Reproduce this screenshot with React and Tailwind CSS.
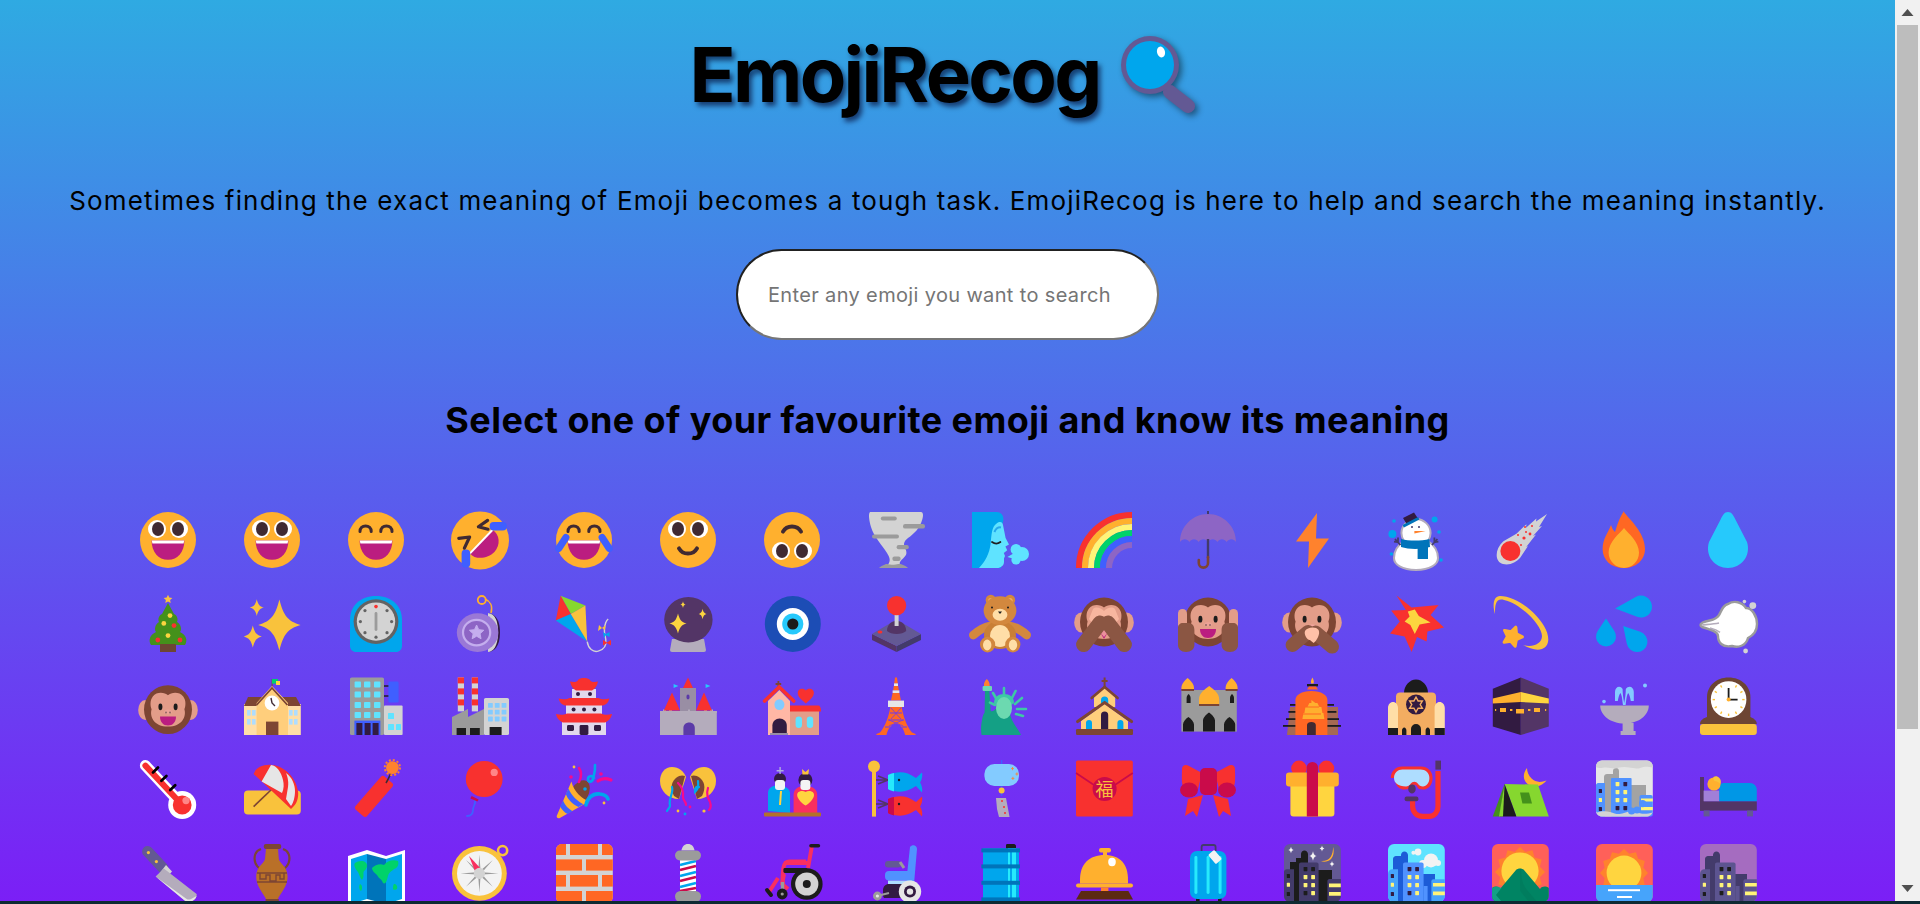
import React from "react";

const Sv = ({ children }) => (
  <svg viewBox="0 0 32 32" className="block w-16 h-16 overflow-visible">{children}</svg>
);

const FACE = "#FFB02E", DK = "#402A32", MOUTH = "#BB1D80", TEAR = "#3F5FFF";
const Face = () => <circle cx="16" cy="16" r="14" fill={FACE} />;
const Mouth = () => (
  <>
    <path d="M7.8 16.2h16.4c0 5.6-3.3 9.7-8.2 9.7s-8.2-4.1-8.2-9.7z" fill={MOUTH} />
    <path d="M7.9 16.2h16.2l-.3 1.6H8.2z" fill="#fff" />
  </>
);
const Eyes = () => (
  <>
    <circle cx="10.5" cy="10.5" r="4.5" fill="#fff" />
    <circle cx="21.5" cy="10.5" r="4.5" fill="#fff" />
    <ellipse cx="11" cy="10.5" rx="3" ry="3.5" fill={DK} />
    <ellipse cx="21" cy="10.5" rx="3" ry="3.5" fill={DK} />
  </>
);
const Arcs = () => (
  <g fill="none" stroke={DK} strokeWidth="1.5" strokeLinecap="round">
    <path d="M8 11.8c0-1.8 1.2-2.8 2.8-2.8s2.8 1 2.8 2.8" />
    <path d="M18.4 11.8c0-1.8 1.2-2.8 2.8-2.8s2.8 1 2.8 2.8" />
  </g>
);
const star4 = (cx, cy, rx, ry) =>
  `M${cx} ${cy - ry}C${cx + rx * 0.2} ${cy - ry * 0.35} ${cx + rx * 0.4} ${cy - ry * 0.15} ${cx + rx} ${cy}C${cx + rx * 0.4} ${cy + ry * 0.15} ${cx + rx * 0.2} ${cy + ry * 0.35} ${cx} ${cy + ry}C${cx - rx * 0.2} ${cy + ry * 0.35} ${cx - rx * 0.4} ${cy + ry * 0.15} ${cx - rx} ${cy}C${cx - rx * 0.4} ${cy - ry * 0.15} ${cx - rx * 0.2} ${cy - ry * 0.35} ${cx} ${cy - ry}z`;
const starN = (cx, cy, r1, r2, n, rot = -90) => {
  const pts = [];
  for (let i = 0; i < n * 2; i++) {
    const a = ((rot + (i * 180) / n) * Math.PI) / 180;
    const r = i % 2 ? r2 : r1;
    pts.push(`${(cx + r * Math.cos(a)).toFixed(2)},${(cy + r * Math.sin(a)).toFixed(2)}`);
  }
  return pts.join(" ");
};
const drop = (tx, ty, cx, cy, r) => {
  const d = Math.hypot(tx - cx, ty - cy);
  const base = Math.atan2(ty - cy, tx - cx);
  const off = Math.acos(r / d);
  const a1 = base + off, a2 = base - off;
  const p1 = [cx + r * Math.cos(a1), cy + r * Math.sin(a1)];
  const p2 = [cx + r * Math.cos(a2), cy + r * Math.sin(a2)];
  return `M${tx} ${ty}L${p1[0].toFixed(2)} ${p1[1].toFixed(2)}A${r} ${r} 0 1 1 ${p2[0].toFixed(2)} ${p2[1].toFixed(2)}z`;
};

const MonkeyBack = ({ y = 0, ears = true }) => (
  <g transform={`translate(0 ${y})`}>
    {ears && (
      <>
        <ellipse cx="4.6" cy="15.2" rx="3.5" ry="5" fill="#E39D89" />
        <ellipse cx="27.4" cy="15.2" rx="3.5" ry="5" fill="#E39D89" />
      </>
    )}
    <ellipse cx="16" cy="15" rx="12" ry="12.2" fill="#7D4533" />
    <path d="M16 7.8c1.6-1.5 5.6-2 7.6.6 1.6 2.1 1.2 4.9.6 6.4 1.1 3.6-1.2 8.7-8.2 8.7s-9.3-5.1-8.2-8.7c-.6-1.5-1-4.3.6-6.4 2-2.6 6-2.1 7.6-.6z" fill="#E39D89" />
  </g>
);
const MonkeyFace = ({ y = 0 }) => (
  <g transform={`translate(0 ${y})`}>
    <ellipse cx="12.2" cy="13.6" rx="1" ry="1.7" fill="#1C1C1C" />
    <ellipse cx="19.8" cy="13.6" rx="1" ry="1.7" fill="#1C1C1C" />
    <circle cx="15" cy="16.5" r=".5" fill="#1C1C1C" />
    <circle cx="17" cy="16.5" r=".5" fill="#1C1C1C" />
    <path d="M16 15c1.2 0 2 .7 2 1.3s-.8 1-2 1-2-.4-2-1 .8-1.3 2-1.3z" fill="#F4A6A0" opacity=".55" />
    <path d="M12 18.5h8c0 2.8-1.6 4.5-4 4.5s-4-1.7-4-4.5z" fill={MOUTH} />
  </g>
);

const win = (x, y, w, h, fill, rx = 0.3) => <rect key={`${x}-${y}`} x={x} y={y} width={w} height={h} rx={rx} fill={fill} />;

const City = ({ bg, back, backDark, mid, left, right, wins = "#321B41", lit = "#FFF478", extra }) => (
  <>
    <rect x="2" y="1" width="28.4" height="29" rx="3" fill={bg} />
    {extra}
    <path d="M4.5 27V8.5c0-.8.7-1.5 1.5-1.5h2.5V6.5c0-1 .8-1.8 1.7-1.8s1.8.8 1.8 1.8V30H4.5z" fill={backDark} />
    <path d="M19 16h6.5v14H19z" fill={back} />
    <path d="M2 16c0-1.4 1-2.4 2.2-2.4H7V30H5c-1.7 0-3-1.3-3-3z" fill={left} />
    <path d="M9.5 11.3c0-.6.4-1 1-1h8.3c.6 0 1 .4 1 1V30H9.5z" fill={mid} />
    <path d="M19.8 22h2v8h-2z" fill={mid} />
    <path d="M23.7 19.6c0-.6.4-1 1-1h5.7V27c0 1.7-1.3 3-3 3h-3.7z" fill={right} />
    <path d="M24.5 20.5h5.9v1.8h-5.9zM24.5 24.8h5.9v1.8h-5.9z" fill={lit} />
    {[[11.8, 12.5, 0], [15.6, 12.5, 0], [11.8, 16.5, 1], [15.6, 16.5, 1], [11.8, 20.5, 1], [15.6, 20.5, 1], [11.8, 24.5, 0], [15.6, 24.5, 1]].map(([x, y, l]) => win(x, y, 1.9, 2.1, l ? lit : wins))}
    {[[3.4, 16, 0], [3.4, 20.4, 1], [3.4, 25, 0]].map(([x, y, l]) => win(x, y, 1.6, 2, l ? lit : wins))}
  </>
);

const emojis = [
  <Sv><Face /><Eyes /><Mouth /></Sv>,
  <Sv><Face /><Eyes /><Mouth /></Sv>,
  <Sv><Face /><Arcs /><Mouth /></Sv>,
  <Sv>
    <circle cx="16" cy="16.2" r="14.5" fill={FACE} />
    <path d="M11 22.7 22.2 11c3.8 2 4.2 7.7 1 11-3.2 3.3-9.4 4.2-12.2.7z" fill={MOUTH} />
    <path d="M11 22.7 22.2 11" stroke="#fff" strokeWidth="1" />
    <rect x="20.8" y="7" width="8.6" height="4.3" rx="2" fill={TEAR} />
    <rect x="6.8" y="20.7" width="4.3" height="9" rx="2" fill={TEAR} />
    <path d="M19.8 6.2 15.2 9.4 20 10.6M5.4 15.2l5.4-.7-2.6 5.6" fill="none" stroke={DK} strokeWidth="1.6" strokeLinecap="round" strokeLinejoin="round" />
  </Sv>,
  <Sv>
    <Face /><Arcs /><Mouth />
    <path d="M6.9 14.8 3.4 20.2M25.1 14.8l3.5 5.4" stroke={TEAR} strokeWidth="3.6" strokeLinecap="round" />
  </Sv>,
  <Sv>
    <Face /><Eyes />
    <path d="M11.5 20.2c1 1.8 2.8 2.6 4.5 2.6s3.5-.8 4.5-2.6" fill="none" stroke={DK} strokeWidth="2" strokeLinecap="round" />
  </Sv>,
  <Sv>
    <Face />
    <g transform="rotate(180 16 16)">
      <Eyes />
      <path d="M11.5 20.2c1 1.8 2.8 2.6 4.5 2.6s3.5-.8 4.5-2.6" fill="none" stroke={DK} strokeWidth="2" strokeLinecap="round" />
    </g>
  </Sv>,
  <Sv>
    <path d="M3 2H28.500c1 0 1.300 1.500 .7 3.500C28 10 25 13 22 15c-2 1.500-2.500 3-1.500 5 .8 1.600 1.200 3-.2 4.400-1.500 1.600-2.600 2.500-2.400 3.600L19 30H11l1.500-2.500c.8-1.600.2-3-1-5C9 18.500 5 14.500 3.500 9.500 2.700 6.500 2 3 3 2z" fill="#D3D3D3" />
    <path d="M10.500 28.200c-1 .4-2.500 1-3 1.800H22c-.5-.8-2-1.400-3-1.800-1.500-.5-2-.2-4 .2-1.500.2-3.200-.8-4.500-.2z" fill="#9B9B9B" />
    <g fill="#9B9B9B">
      <rect x="8.400" y="4.300" width="8" height="2" rx="1" />
      <rect x="19.500" y="8" width="11" height="2.300" rx="1.100" />
      <rect x="4" y="13.300" width="13.500" height="2" rx="1" />
      <rect x="16.300" y="18.500" width="6.100" height="2.100" rx="1" />
      <rect x="14.200" y="24.300" width="4.100" height="2.200" rx="1" />
    </g>
  </Sv>,
  <Sv>
    <path d="M2 2h12.500c1.800 0 3.200 1.500 3.200 3.500S16.500 9 16.500 10V30H2z" fill="#00A6ED" />
    <path d="M5.500 30c3-3 5.300-7.500 5.800-12 .5-5 .5-8.500 3-10.300 1.700-1.200 3-.7 3.200.8l1.300 6.500 1.700 3.300-1.800 1 .9 1.800-1.700 1.400.6 1.500-.5 1.200V27c0 1.800-1.600 3-3.500 3z" fill="#5FE3FF" />
    <path d="M13.200 12c.8-1.800 2-2.500 3.300-2.300" stroke="#26A8ED" strokeWidth="1" fill="none" />
    <path d="M12 17c1.200.9 3 .9 4.200 0" stroke="#212121" strokeWidth=".9" fill="none" strokeLinecap="round" />
    <g fill="#5FE3FF">
      <circle cx="24" cy="20.700" r="2.700" />
      <circle cx="27" cy="23" r="3.500" />
      <circle cx="24" cy="26" r="2.300" />
      <path d="M19.700 24.500 24 22l1 4z" />
    </g>
  </Sv>,
  <Sv>
    {[[26.5, "#F8312F"], [23.5, "#FFB02E"], [20.5, "#FFF478"], [17.5, "#00D26A"], [14.5, "#3F5FFF"], [11.5, "#8D65C5"]].map(([r, c]) => (
      <path key={r} d={`M${30 - r} 30A${r} ${r} 0 0 1 30 ${30 - r}`} fill="none" stroke={c} strokeWidth="3.050" />
    ))}
  </Sv>,
  <Sv>
    <path d="M15.500 1.500h1V4h-1z" fill="#433B6B" />
    <path d="M2 17C2 9.500 8 3 16 3s14 6.500 14 14c-1.200-1.800-3.400-1.800-4.700 0-1.300-1.800-3.400-1.800-4.600 0-1.300-1.800-3.400-1.800-4.700 0-1.200-1.800-3.400-1.800-4.700 0-1.200-1.800-3.400-1.800-4.600 0C5.500 15.200 3.300 15.200 2 17z" fill="#8D65C5" />
    <path d="M15.400 15.500h1.200V25h-1.200z" fill="#433B6B" />
    <path d="M16 24.500v3a2.300 2.300 0 0 1-4.600 0V26" fill="none" stroke="#7D4533" strokeWidth="1.300" strokeLinecap="round" />
  </Sv>,
  <Sv><path d="M18.500 2.500 8 16.800h6.500L14 30l10.500-14.700H18z" fill="#FF822D" /></Sv>,
  <Sv>
    <path d="M16 5.500c4 0 7.300 3.200 7.300 7 0 1.500-.5 2.800-1.300 4 3 2 5 5.200 5 8.500 0 3.300-4 6-11 6s-11-2.700-11-6c0-3.300 2-6.500 5-8.500-.8-1.200-1.300-2.500-1.300-4 0-3.800 3.300-7 7.300-7z" fill="#fff" stroke="#B4ACBC" strokeWidth="1" />
    <path d="M8.500 15.500c4 1 10 1 14.200 0l.3 4c-4.500 1.300-10.500 1.300-14.500 0z" fill="#0074BA" />
    <path d="M16.800 19h5.200v6.500h-5.200z" fill="#0074BA" />
    <path d="M9.500 5l5.500-2.700 1.800 2.700-5.500 3z" fill="#321B41" />
    <path d="M9.300 8.500l7.700-4 .7 1.300-7.700 4z" fill="#0074BA" />
    <path d="M15.200 11.500h5.600l-5.600 1.200z" fill="#FF822D" strokeLinejoin="round" />
    <circle cx="14" cy="9.500" r=".5" fill="#433B6B" /><circle cx="17.500" cy="9.500" r=".5" fill="#433B6B" />
    <path d="M8.200 18.500 5.500 15.500M6.800 17 5 16.800M7 17.200 7 14.800M24 18.500l2.700-3M25.400 17l1.800-.2M25.200 17.200l0-2.400" stroke="#433B6B" strokeWidth=".9" fill="none" />
    <g fill="#00A6ED">
      <circle cx="4.200" cy="13" r="2" /><circle cx="25.300" cy="5.700" r="1.500" /><circle cx="5" cy="6.500" r=".9" />
      <circle cx="27.500" cy="12" r=".9" /><circle cx="3.700" cy="23" r=".9" /><circle cx="28.500" cy="26" r=".9" />
    </g>
  </Sv>,
  <Sv>
    <path d="M29.500 3 24 6.800l.2-1.600-5.200 4.700.2-1.800-5 4.800-6.500 3.700C3 21 3.500 27 7.500 28c3.500.9 6.500-1 8.500-3l4-6-.9.500 4.900-6.200-1.500.7 4.500-5-1.500.5z" fill="#D3D3D3" />
    <circle cx="11.200" cy="21.500" r="5" fill="#F8312F" />
    <g fill="#F8312F">
      <circle cx="18.500" cy="9.500" r=".5" /><circle cx="22" cy="9" r=".5" /><circle cx="15" cy="13.500" r=".5" />
      <circle cx="18" cy="15" r=".8" /><circle cx="21" cy="13" r=".7" /><circle cx="19" cy="12" r=".5" /><circle cx="16.500" cy="18.500" r=".5" />
    </g>
  </Sv>,
  <Sv>
    <path d="M16 2c2 3 10.500 10 10.500 18.500C26.500 26 22 30 16 30c-6.500 0-10.700-4-10.700-9.500 0-5 2.700-8 4.200-12 .5 1.500 1 2.500 2 3.500 1-3 2-7 4.500-10.500z" fill="#FF6723" />
    <path d="M16 10c2.200 2.700 7.500 7 7.500 12.300C23.500 26.800 20 30 16 30s-7.700-3.200-7.700-7.700C8.300 17 13.800 12.700 16 10z" fill="#FFB02E" />
  </Sv>,
  <Sv><path d="M16 2c1.800 0 2.800 1.800 3.700 3.800L25.500 17c2.200 7-3 13-9.500 13S4.300 24 6.500 17l5.800-11.200C13.200 3.800 14.200 2 16 2z" fill="#26C9FC" /></Sv>,

  <Sv>
    <polygon points={starN(16, 3.700, 2.300, 1.100, 5)} fill="#F9C23C" />
    <path d="M16 5.500 19 11c2 1 2 3 1.500 4 2 1 2.500 4 1.500 5 3 1.500 4 4 2.500 6.500h-17C6 24 7 21.500 10 20c-1-1-.5-4 1.500-5-.5-1-.5-3 1.500-4z" fill="#44911B" />
    <path d="M12 26h8v4h-8z" fill="#6D4534" />
    <g fill="#FCD53F"><circle cx="17" cy="11.800" r="1.200" /><circle cx="13.900" cy="15.700" r="1.200" /><circle cx="16" cy="21.800" r="1.200" /></g>
    <g fill="#F8312F"><circle cx="19" cy="16.800" r="1.200" /><circle cx="10.900" cy="24" r="1.200" /><circle cx="22" cy="24" r="1.200" /></g>
  </Sv>,
  <Sv>
    <g fill="#F9C23C">
      <path d={star4(19.700, 16.500, 10.600, 12.700)} />
      <path d={star4(8.400, 7.800, 3.500, 4.200)} />
      <path d={star4(6.400, 22.300, 4.500, 5.500)} />
    </g>
  </Sv>,
  <Sv>
    <path d="M3 27V14C3 7 8 2 16 2s13 5 13 12v13c0 1.700-1.300 3-3 3H6c-1.700 0-3-1.300-3-3z" fill="#00A6ED" />
    <circle cx="16" cy="14.800" r="11.200" fill="#636363" />
    <circle cx="16" cy="14.800" r="9.600" fill="#D3D3D3" />
    <circle cx="16" cy="7.300" r=".9" fill="#F8312F" />
    <rect x="15.300" y="10" width="1.400" height="9.500" rx=".7" fill="#9B9B9B" />
    <g fill="#636363">
      {[45, 90, 135, 180, 225, 270, 315].map((a) => (
        <circle key={a} cx={16 + 7.800 * Math.sin((a * Math.PI) / 180)} cy={14.800 - 7.800 * Math.cos((a * Math.PI) / 180)} r=".8" />
      ))}
    </g>
  </Sv>,
  <Sv>
    <circle cx="16.900" cy="4" r="2" fill="none" stroke="#FFB02E" strokeWidth=".9" />
    <path d="M18.500 3.500c2.500 1 4 3.500 3 7" fill="none" stroke="#FFB02E" strokeWidth=".8" />
    <path d="M20 10.500c2.500.5 6 2 6 9.800 0 7-3 9.700-6 9.700z" fill="#321B41" />
    <path d="M20 10.500c2.500.5 5 2 5 9.800 0 7-2.500 9.700-5 9.700z" fill="#D3D3D3" />
    <ellipse cx="14.800" cy="20.300" rx="10.400" ry="9.700" fill="#9A78D6" />
    <ellipse cx="14.300" cy="20.300" rx="6.800" ry="6.400" fill="#8D65C5" stroke="#C4AEEE" strokeWidth="1.100" />
    <polygon points={starN(14.300, 20.300, 3.800, 1.800, 5)} fill="#C4AEEE" stroke="#C4AEEE" strokeWidth=".5" strokeLinejoin="round" />
  </Sv>,
  <Sv>
    <polygon points="4.300,1.900 9.400,11 16.700,6.800" fill="#86D72F" />
    <polygon points="4.300,1.900 9.400,11 1.900,14.300" fill="#F8312F" />
    <polygon points="9.400,11 1.900,14.300 17.600,24.800" fill="#00A6ED" />
    <polygon points="9.400,11 16.700,6.800 17.600,24.800" fill="#F9C23C" />
    <path d="M17.600 24.800c.5 3.500 3 5.500 5.500 4.800 2.800-.8 4.200-3 3.800-5.800-.5-3.500-1.500-4.500 0-8.500.3-1 .8-1.500 1.200-1.800" fill="none" stroke="#D3D3D3" strokeWidth=".7" />
    <polygon points="23.500,16.500 25,18 26.800,16.500 26.500,19 25,18 23,19.500" fill="#F9C23C" />
    <polygon points="25.500,20 27,21 28.800,20 28.800,22.500 27,21.500 26,23" fill="#00A6ED" />
    <polygon points="25.500,24 27.500,25.200 29.500,24 29.500,26.700 27.500,25.500 25.500,26.700" fill="#F8312F" />
  </Sv>,
  <Sv>
    <path d="M8 23.500h16l1 5.500a1 1 0 0 1-1 1H8a1 1 0 0 1-1-1z" fill="#B4ACBC" />
    <ellipse cx="16.200" cy="13.900" rx="12.100" ry="11.400" fill="#533566" />
    <g fill="#FCD53F">
      <path d={star4(11, 15.700, 4.300, 5)} />
      <path d={star4(23.300, 11, 2, 2.600)} />
      <path d={star4(13.500, 6.300, 1.300, 1.700)} />
    </g>
  </Sv>,
  <Sv>
    <circle cx="16.400" cy="16" r="14" fill="#1C4DB5" />
    <circle cx="16.400" cy="16" r="8" fill="#fff" />
    <circle cx="16.400" cy="16" r="5.300" fill="#26C9FC" />
    <circle cx="16.400" cy="16" r="2.800" fill="#1C1C1C" />
  </Sv>,
  <Sv>
    <polygon points="4,21 16.300,27 16.300,30 4,24" fill="#533566" />
    <polygon points="28.500,21 16.300,27 16.300,30 28.500,24" fill="#433B6B" />
    <path d="M4 21l11-6.500c.8-.4 1.700-.4 2.500 0l11 6.500-12.200 6z" fill="#635994" />
    <path d="M11.500 19.500c0-3 2-5 4.800-5s4.800 2 4.800 5c-2 2-7.500 2-9.600 0z" fill="#533566" />
    <rect x="15.300" y="9" width="2" height="8" fill="#D3D3D3" />
    <ellipse cx="16.300" cy="6.800" rx="4.800" ry="4.800" fill="#F8312F" />
    <ellipse cx="8" cy="20" rx="1.200" ry=".8" fill="#F8312F" />
  </Sv>,
  <Sv>
    <circle cx="11.400" cy="4" r="2.600" fill="#D3883E" /><circle cx="21" cy="4" r="2.600" fill="#D3883E" />
    <circle cx="11.400" cy="4.300" r="1.300" fill="#F3AD61" /><circle cx="21" cy="4.300" r="1.300" fill="#F3AD61" />
    <path d="M11 17c-3 .5-6 2.500-8.300 4.500M21 17c3 .5 6 2.500 8.300 4.500" stroke="#D3883E" strokeWidth="4.400" strokeLinecap="round" fill="none" />
    <ellipse cx="16" cy="21.500" rx="8" ry="7" fill="#C97F35" />
    <ellipse cx="16" cy="22" rx="5" ry="5.500" fill="#FFDEA7" />
    <ellipse cx="9.800" cy="26.300" rx="3.800" ry="3.900" fill="#D3883E" />
    <ellipse cx="22.400" cy="26.300" rx="3.800" ry="3.900" fill="#D3883E" />
    <ellipse cx="9.600" cy="26.500" rx="2.100" ry="2.700" fill="#FFDEA7" />
    <ellipse cx="22.500" cy="26.500" rx="2.100" ry="2.700" fill="#FFDEA7" />
    <ellipse cx="16" cy="9.300" rx="8.200" ry="7.200" fill="#D3883E" />
    <ellipse cx="16" cy="11.400" rx="3.700" ry="3" fill="#FFDEA7" />
    <circle cx="12" cy="7.800" r=".5" fill="#1C1C1C" /><circle cx="20" cy="7.800" r=".5" fill="#1C1C1C" />
    <path d="M15 9.800h2l-1 1.200z" fill="#1C1C1C" />
  </Sv>,
  <Sv>
    <MonkeyBack />
    <path d="M13.500 19h5l-2.500 4.500z" fill={MOUTH} />
    <path d="M10.500 8.500c1.500-1.500 4-.5 5.500 1 1.500-1.500 4-2.500 5.500-1l2 5-5 6-2.500 3-2.500-3-5-6z" fill="#FFC0A8" opacity=".7" />
    <path d="M5.800 26.300 14 15.500M26.200 26.300 18 15.500" stroke="#8B5643" strokeWidth="7.500" strokeLinecap="round" />
  </Sv>,
  <Sv>
    <MonkeyBack ears={false} />
    <MonkeyFace />
    <rect x="1" y="8.500" width="4.500" height="10" rx="2.200" fill="#E39D89" />
    <rect x="26.500" y="8.500" width="4.500" height="10" rx="2.200" fill="#E39D89" />
    <path d="M1 18c0-1.500 1-2.500 2.500-2.500H6c2 0 3.200 1.200 3.200 3.500v7.500C9.200 28.500 7.500 30 5 30s-4-1.500-4-3.500zM31 18c0-1.500-1-2.500-2.500-2.500H26c-2 0-3.200 1.200-3.200 3.500v7.500c0 2 1.700 3.500 4.200 3.500s4-1.500 4-3.500z" fill="#8B5643" />
  </Sv>,
  <Sv>
    <MonkeyBack />
    <ellipse cx="12.300" cy="13.600" rx="1" ry="1.700" fill="#1C1C1C" />
    <ellipse cx="19.700" cy="13.600" rx="1" ry="1.700" fill="#1C1C1C" />
    <ellipse cx="16" cy="18" rx="3" ry="1.800" fill="#F4A6A0" />
    <path d="M6.300 26.500 14 20M26 27.300l-8.200-7" stroke="#8B5643" strokeWidth="7" strokeLinecap="round" />
    <path d="M12.500 19.500c1-2 5.500-2.500 6.800-.5 1 2-1 5.500-2.500 6.500-1.200-.8-1.500-1.500-2-1.500-1 0-3-2.500-2.300-4.500z" fill="#FFC0A8" />
  </Sv>,
  <Sv>
    <polygon points="6.300,1.800 13.800,7.700 27.300,6.500 23.300,11.500 30,17.700 21.700,19.800 21.300,24.800 16.500,22.500 13.800,30 10.300,22.300 3,20.700 7.900,14.800 3.600,9.300 10.900,9" fill="#F8312F" />
    <polygon points="15.400,8.700 17.400,12 23.300,15.300 17.800,16.200 15.400,21 13.200,16.500 10.300,14.800 12.800,12.300 11.900,9.800" fill="#FCD53F" />
  </Sv>,
  <Sv>
    <path d="M3.500 11C2 6 3 2 6 2c8 0 18 8 22 15 3 5 3 10-1 11.500-3 1-7-.5-9.500-2 4.500 1.500 9.500-.5 9.500-4.500 0-5-10-16-19-18-4-1-4.500 2-4.500 7z" fill="#F9C23C" />
    <polygon points={starN(12.200, 22.300, 5, 2.500, 5, -70)} fill="#FFB02E" stroke="#FFB02E" strokeWidth="1.500" strokeLinejoin="round" />
  </Sv>,
  <Sv>
    <g fill="#00A6ED">
      <path d={drop(11.600, 8.200, 24.500, 7.300, 5.500)} strokeLinejoin="round" />
      <path d={drop(7, 13.200, 7, 22.300, 5)} />
      <path d={drop(15.600, 17, 22.500, 24.800, 5.200)} />
    </g>
  </Sv>,
  <Sv>
    <path d="M3 15.500c1-1 5-1 7-2.500 3-1.500 2-6 6-7 3-2 7-1 9 2 3 0 5.500 4 5.500 8 0 4-2.500 6-4.500 7-1 4-5 5-8 4-5 1-7-2-7-5 0-2-3-3-8-4.500-1-.5-1-1.500 0-2z" fill="#fff" stroke="#9B9B9B" strokeWidth="1.200" />
    <path d="M3 16.500c3-.3 6-.5 8.500-1M7 18c2 .5 3.500 1 5 2.200" fill="none" stroke="#B4ACBC" strokeWidth=".8" />
    <circle cx="28.400" cy="6.800" r="1.700" fill="#D3D3D3" /><circle cx="24.200" cy="4.800" r=".9" fill="#D3D3D3" /><circle cx="24.800" cy="29.500" r="1.200" fill="#D3D3D3" />
  </Sv>,

  <Sv><MonkeyBack y={2.300} /><MonkeyFace y={2.300} /></Sv>,
  <Sv>
    <path d="M15.800 2v4h.5V2z" fill="#7D4533" />
    <path d="M16 2h3v2.300h-3z" fill="#00D26A" /><path d="M18 3h2v2h-2z" fill="#FCD53F" />
    <rect x="2" y="14.500" width="28.400" height="15.500" fill="#FFDEA7" />
    <path d="M4 11h24l2.400 4.500H2z" fill="#7D4533" />
    <path d="M16 5.500 24 14v16H8.300V14z" fill="#FFCE7C" />
    <path d="M8.300 15 16 6.500l7.700 8.500" fill="none" stroke="#7D4533" strokeWidth=".9" />
    <circle cx="16" cy="14" r="3.700" fill="#fff" />
    <path d="M15.500 11.500l.5 2.500 1.500 1.500" fill="none" stroke="#402A32" strokeWidth=".7" />
    <rect x="13" y="23.300" width="6.200" height="6.700" fill="#7D4533" />
    <g fill="#AEDDFF">
      <rect x="3.500" y="17.500" width="1.800" height="2.800" /><rect x="6" y="17.500" width="1.800" height="2.800" />
      <rect x="3.500" y="22" width="1.800" height="2.800" /><rect x="6" y="22" width="1.800" height="2.800" />
      <rect x="24.500" y="17.500" width="1.800" height="2.800" /><rect x="27" y="17.500" width="1.800" height="2.800" />
      <rect x="24.500" y="22" width="1.800" height="2.800" /><rect x="27" y="22" width="1.800" height="2.800" />
    </g>
  </Sv>,
  <Sv>
    <rect x="22.200" y="3.300" width="5.100" height="10.500" rx=".7" fill="#3F5FFF" />
    <path d="M20 5.500h2.200M20 10.500h2.200" stroke="#212121" strokeWidth=".7" />
    <rect x="20" y="15.300" width="9.300" height="14.700" fill="#D3D3D3" rx=".5" />
    <rect x="3" y="1.200" width="17" height="28.800" rx=".8" fill="#9B9B9B" />
    <g fill="#5FE3FF">
      {[6.900, 11.600, 16.600].flatMap((x) => [4.800, 9.800, 15, 20].map((y) => win(x - 1.600, y - 1.500, 3.200, 3, "#5FE3FF", 0.4)))}
      <rect x="22" y="19" width="3" height="3" rx=".3" /><rect x="22" y="24.500" width="3" height="3" rx=".3" />
      <rect x="26" y="24.500" width="2.500" height="3" rx=".3" />
    </g>
    <rect x="5.200" y="22.800" width="13" height="7.200" fill="#3F5FFF" />
    <path d="M6.200 24h3v6h-3zM10.300 24h3v6h-3zM14.300 24h3v6h-3z" fill="#321B41" />
  </Sv>,
  <Sv>
    {[4.900, 11.900].map((x) => (
      <g key={x}>
        <rect x={x} y="1.200" width="3.100" height="17" fill="#D3D3D3" />
        <rect x={x} y="1.200" width="3.100" height="3" fill="#F8312F" />
        <rect x={x} y="6.700" width="3.100" height="3" fill="#F8312F" />
        <rect x={x} y="12.200" width="3.100" height="3" fill="#F8312F" />
      </g>
    ))}
    <polygon points="2,21 10,17 10,21 18,17 18,30 2,30" fill="#9B9B9B" />
    <rect x="18" y="11.500" width="12.500" height="18.500" rx=".8" fill="#D3D3D3" />
    <g>
      {[20, 23.400, 26.800].flatMap((x) => [14, 17.400, 20.800].map((y) => win(x, y, 2.400, 2.400, "#83CBFF")))}
    </g>
    <path d="M4.300 26.500h4.700V30H4.300zM11 26.500h4.900V30H11zM20.800 26h6V30h-6z" fill="#1C1C1C" />
  </Sv>,
  <Sv>
    <rect x="5" y="23" width="22" height="7" fill="#E1D8EC" />
    <rect x="7" y="14.500" width="18" height="5.500" fill="#E1D8EC" />
    <rect x="10" y="7" width="12" height="5" fill="#E1D8EC" />
    <g fill="#F8312F">
      <path d="M13 2.500c1-1.300 5-1.300 6 0 .3 1 2 1.300 4 .8-.3 2-1.500 3.700-3 4.500H12c-1.500-.8-2.700-2.500-3-4.500 2 .5 3.700.2 4-.8z" />
      <path d="M3.300 11.800c2 .5 4 .5 5.500-.300h14.400c1.500.8 3.500.8 5.500.3-.5 2-1.500 3-3.200 3.500H6.500c-1.700-.5-2.700-1.500-3.200-3.500z" />
      <path d="M2 19.500c2 .5 4 .5 5.500-.300h17c1.500.8 3.500.8 5.500.3-.5 2.400-2 3.700-3.500 4.200h-21c-1.500-.5-3-1.800-3.500-4.200z" />
    </g>
    <g fill="#321B41">
      <circle cx="13" cy="9.500" r="1" /><circle cx="19" cy="9.500" r="1" />
      <circle cx="10.800" cy="17.300" r="1" /><circle cx="16" cy="17.300" r="1" /><circle cx="21.200" cy="17.300" r="1" />
      <rect x="7.500" y="25" width="3.500" height="3" rx=".7" /><rect x="13.800" y="25" width="4.400" height="5" rx=".7" /><rect x="21" y="25" width="3.500" height="3" rx=".7" />
    </g>
  </Sv>,
  <Sv>
    <rect x="12" y="6.500" width="8" height="12" fill="#998EA4" />
    <polygon points="16,1.200 13.500,6.500 18.500,6.500" fill="#F8312F" />
    <rect x="2" y="18" width="28.400" height="12" fill="#B4ACBC" />
    <path d="M2 18h1.500v-.7H5V18h1.500v-.7H8V18h8v-.7h1V18h7v-.7h1.500v.7H27v-.7h1.500v.7h1.900v1H2z" fill="#B4ACBC" />
    <polygon points="8,8.800 3.900,17.800 12,17.800" fill="#F8312F" />
    <polygon points="24,8.800 20,17.800 28,17.800" fill="#F8312F" />
    <path d="M8.800 4.500 11.200 5.500 8.800 6.500zM24.800 4.500 27.200 5.500 24.800 6.500z" fill="#26C9FC" />
    <ellipse cx="16" cy="11" rx=".8" ry="1.200" fill="#5B3AA8" />
    <path d="M13.700 30v-3.600c0-1.600 1.300-2.700 2.900-2.700s2.800 1.100 2.800 2.700V30z" fill="#5B3AA8" />
  </Sv>,
  <Sv>
    <path d="M9.200 3v4M7.800 4.500h2.800" stroke="#7D4533" strokeWidth=".9" />
    <path d="M4 13 9.700 7.500 15 13v17H4z" fill="#FFB7A5" />
    <path d="M2.300 13 9.600 6l7.300 7" fill="none" stroke="#F8312F" strokeWidth="1.800" strokeLinecap="round" />
    <rect x="15" y="18" width="14.500" height="12" fill="#E39D89" />
    <path d="M15 15.300h14c.9 0 1.500.9 1.500 3H15z" fill="#F8312F" />
    <ellipse cx="9.700" cy="14.800" rx="2.500" ry="2.700" fill="#83CBFF" />
    <path d="M6.200 30v-4.800c0-2 1.600-3.500 3.600-3.500s3.600 1.500 3.600 3.500V30z" fill="#321B41" />
    <rect x="5" y="29" width="9" height="1" fill="#998EA4" />
    <rect x="17.800" y="20.700" width="3.200" height="5.800" rx="1.600" fill="#5FE3FF" /><rect x="23.400" y="20.700" width="3.200" height="5.800" rx="1.600" fill="#5FE3FF" />
    <path d="M23 7.500c1-1 2.700-.8 3.500.3.800-1.100 2.500-1.300 3.500-.3 1 1.200.5 3-1 4.500l-2.500 2.300L24 12c-1.500-1.500-2-3.300-1-4.500z" transform="translate(-3.600 0)" fill="#F8312F" />
  </Sv>,
  <Sv>
    <path d="M15.500 1.200h1l.4 3h-1.800z" fill="#FF6723" />
    <rect x="15" y="4.200" width="2" height="1.300" fill="#E6E6E6" />
    <path d="M14.900 5.500h2.200l.3 2.200h-2.800z" fill="#FF6723" />
    <rect x="14.300" y="7.700" width="3.400" height="1.300" fill="#E6E6E6" />
    <path d="M14.300 9h3.400l.8 3.800h-5z" fill="#FF6723" />
    <path d="M6.200 29.500 8 28.800c2.800-3.500 4.300-8 5.200-12.800h5.600c.9 4.800 2.400 9.300 5.200 12.800l1.800.7V30h-5.200c-.8-3.200-2.400-5.600-4.600-5.600S12 26.800 11.200 30H6.200z" fill="#FF6723" />
    <path d="M13 19h6M12 22.500h8M10.500 26h2.500M19 26h2.500" stroke="#6d38f0" strokeWidth=".6" />
    <path d="M13.500 16.500l5 5.500M18.500 16.500l-5 5.500M12.500 22.500l7 3M19.500 22.500l-7 3" stroke="#6d38f0" strokeWidth=".4" />
    <rect x="12" y="12.800" width="8" height="3.200" fill="#E6E6E6" />
  </Sv>,
  <Sv>
    <path d="M9.400 2c1 1 1.600 2.200 1.400 3.500H8c-.2-1.300.4-2.500 1.400-3.500z" fill="#FF822D" />
    <rect x="7.300" y="5.500" width="4.700" height="2.500" rx=".5" fill="#6CD9B0" />
    <path d="M8.500 8h2.200l.7 11H8.300z" fill="#14A085" />
    <g stroke="#3DC9A5" strokeWidth="1.300" strokeLinecap="round">
      <path d="M18 12 18 6.500M21.500 12.500l2.300-4.500M23.500 14.500l3.500-3M24.500 17h4.500M24 19.500l3.500 1M14.500 12.500l-2-3.500M13.500 15l-2.500-1.200" />
    </g>
    <path d="M6.800 30c-.5-2.500-.3-5 .3-8 .5-3 1.800-4.500 3.800-4 1.800.6 2.600-1 3-1l6.700 1c.5 2 1 4 2.500 6.500 1 1.700 2.500 3.500 3.400 5.500z" fill="#14A085" />
    <path d="M13 14c0-3 2.200-4.500 5-4.500s5 1.500 5 4.500l-1 .7h-8z" fill="#3DC9A5" />
    <ellipse cx="18" cy="16.500" rx="4" ry="5.500" fill="#6CD9B0" />
  </Sv>,
  <Sv>
    <path d="M16.300 1.200v5.500M14.800 3h3" stroke="#7D4533" strokeWidth="1" />
    <path d="M11 16V10.500L16.300 6l5.300 4.500V16z" fill="#FFCE7C" />
    <path d="M9.800 11.500 16.300 6l6.500 5.500" fill="none" stroke="#7D4533" strokeWidth="1.300" strokeLinecap="round" />
    <path d="M14.500 14.500v-2a1.800 1.800 0 0 1 3.600 0v2z" fill="#00A6ED" />
    <path d="M4.500 23 16.300 14.500 28 23v4H4.500z" fill="#FFCE7C" />
    <path d="M2.800 23.300 16.300 13.800l13.500 9.500" fill="none" stroke="#7D4533" strokeWidth="1.500" strokeLinecap="round" />
    <rect x="2" y="27" width="28.500" height="3" rx=".6" fill="#7D4533" />
    <path d="M14.500 27v-7a1.800 1.800 0 0 1 3.600 0v7z" fill="#321B41" />
    <path d="M7 27v-3a1.500 1.500 0 0 1 3 0v3zM22.700 27v-3a1.500 1.500 0 0 1 3 0v3z" fill="#00A6ED" />
  </Sv>,
  <Sv>
    <rect x="2.700" y="7.500" width="27.700" height="20.800" fill="#9B9B9B" />
    <g fill="#FFB02E">
      <path d="M5.800 1.500c1.500 1.300 3.200 3 3.200 5v.5H2.700v-.5c0-2 1.600-3.700 3.100-5z" />
      <path d="M27.800 1.500c1.500 1.300 3 3 3 5v.5h-6v-.5c0-2 1.500-3.700 3-5z" />
      <path d="M16.600 5.500c2 1.500 5 3.500 5 6.800v2.500H11.500v-2.500c0-3.300 3-5.300 5.100-6.800z" />
    </g>
    <path d="M2.700 7h6.300v1H2.700zM24.800 7h6v1h-6zM11.500 14.500h10.100v1H11.500z" fill="#7D4533" />
    <g fill="#1C1C1C">
      <path d="M5.300 14v-2.500c0-.9.500-1.500 1-2 .5.500 1 1.100 1 2V14zM27 14v-2.500c0-.9.500-1.500 1-2 .5.500 1 1.100 1 2V14z" />
      <path d="M3.500 28.300v-3.500c0-1.500 1.300-2.800 2.700-3.800 1.400 1 2.800 2.300 2.800 3.800v3.500zM13.500 28.300v-5.500c0-1.500 1.600-3 3-4 1.400 1 3 2.500 3 4v5.500zM24 28.300v-3.500c0-1.500 1.300-2.800 2.700-3.800 1.400 1 2.900 2.300 2.900 3.800v3.500z" />
    </g>
  </Sv>,
  <Sv>
    <path d="M16.200 1.200c.5 1 1 2 .6 3h-1.200c-.4-1 .1-2 .6-3z" fill="#FFB02E" />
    <path d="M13.500 4.500h5.500v1.200h-5.500z" fill="#1C1C1C" />
    <path d="M14.500 5.700h3.500l1 1.500h-5.500z" fill="#FF6723" />
    <path d="M3.500 30h25.500v-14H5z" fill="#A56953" />
    <g fill="#1C1C1C">
      <rect x="5" y="14.500" width="22" height=".9" /><rect x="4.200" y="18" width="24" height=".9" />
      <rect x="3" y="21.600" width="26.500" height=".9" /><rect x="1.500" y="25" width="29" height=".9" />
    </g>
    <path d="M8.200 30V12.500c0-2.500 3-4.500 8-4.500s8 2 8 4.500V30z" fill="#FF6723" transform="translate(-.5 0)" />
    <path d="M15.700 12.500l2 1.500h1l1 2h1l.5 3h.5l.5 3h-11l.5-3h.5l.5-3h1l1-2h1z" fill="#FFB02E" />
    <path d="M12 16h7.500M11 19.500h9.500" stroke="#FF6723" strokeWidth=".5" />
    <path d="M13.500 30v-5c0-1 1-1.500 2.200-1.500s2.200.5 2.200 1.500v5z" fill="#402A32" />
  </Sv>,
  <Sv>
    <path d="M10 9c0-3.500 2.800-6.700 6-6.700s6 3.200 6 6.700z" fill="#1C1C1C" />
    <path d="M6 10.700c0-1.200.8-2 2-2h16c1.200 0 2 .8 2 2V30H6z" fill="#F3AD61" />
    <path d="M2 16.500c0-1.700 1.100-3 2.500-3S7 14.800 7 16.500V30H2zM25.300 16.500c0-1.700 1.100-3 2.500-3s2.600 1.300 2.600 3V30h-5.100z" fill="#FFDEA7" />
    <path d="M2 26.500h5V30H2zM25.300 26.500h5.100V30h-5.100z" fill="#1C1C1C" />
    <circle cx="16" cy="14.800" r="5" fill="#321B41" />
    <polygon points={starN(16, 14.800, 3.700, 2.100, 6)} fill="none" stroke="#F3AD61" strokeWidth=".7" />
    <path d="M13.500 30v-3a2.500 2.500 0 0 1 5 0v3zM9 30v-2.300c0-.8.500-1.500 1.100-1.500s1.100.7 1.100 1.500V30zM20.800 30v-2.300c0-.8.500-1.500 1.100-1.500s1.100.7 1.100 1.500V30z" fill="#1C1C1C" />
  </Sv>,
  <Sv>
    <path d="M16.400 1.200 2.400 6.900v18.800l14 4.300z" fill="#321B41" />
    <path d="M16.400 1.200l14 5.700v18.800l-14 4.300z" fill="#533566" />
    <path d="M16.400 8.500 2.400 11.700v2.500l14-.7z" fill="#FFB02E" />
    <path d="M16.400 8.500l14 3.200v2.500l-14-.7z" fill="#FFD53F" />
    <path d="M3.500 17h.6v1h-.6zM6 16.500h3v2H6zM11 17h1.200v1H11zM14 17h4v2.300h-4zM20 17h1.200v1H20zM23 16.500h3v2h-3zM28.500 17h.6v1h-.6z" fill="#FFB02E" />
  </Sv>,
  <Sv>
    <path d="M14.300 30v-2h1v-4h5.500v4h1v2z" fill="#B4ACBC" />
    <path d="M4.100 15.300h24.300c0 5-5.200 9-12.100 9s-12.200-4-12.200-9z" fill="#B4ACBC" />
    <path d="M11.500 13v-4.500c0-2.500 2.500-3.500 3.800-1.500 0 2 .3 4.500.8 7 .5-2.500.8-5 .8-7 1.500-2 4-1 4 1.500V13h-1.500c-.3-1.500-.5-3-1.300-4-.8 1-1 4-1.300 6h-1.300c-.3-2-.5-5-1.300-6-.8 1-1 2.500-1.300 4z" fill="#83CBFF" />
    <circle cx="26.500" cy="5.300" r="1" fill="#83CBFF" /><circle cx="6" cy="13.300" r=".9" fill="#83CBFF" />
  </Sv>,
  <Sv>
    <path d="M5.500 24V11C5.500 5.500 10 1.200 16.300 1.200S27.200 5.500 27.200 11v13z" fill="#6D4534" />
    <path d="M5.500 21c-1.500.5-3.500 1.500-3.500 3.500h28.400c0-2-2-3-3.200-3.500z" fill="#6D4534" />
    <ellipse cx="16.300" cy="12.300" rx="8.900" ry="9.200" fill="#fff" />
    <rect x="2" y="24.500" width="28.400" height="5.500" rx="1.500" fill="#F9C23C" />
    <g stroke="#F9C23C" strokeWidth=".7">
      {[30, 60, 90, 120, 150, 180, 210, 240, 270, 300, 330].map((a) => {
        const c = Math.cos((a * Math.PI) / 180), s = Math.sin((a * Math.PI) / 180);
        return <line key={a} x1={16.300 + 6.800 * s} y1={12.300 - 7 * c} x2={16.300 + 8 * s} y2={12.300 - 8.200 * c} />;
      })}
    </g>
    <path d="M16.300 6.500v6M16.300 12.300h4.500" stroke="#1C1C1C" strokeWidth=".9" />
    <circle cx="16.300" cy="12.300" r="1" fill="#FFB02E" />
  </Sv>,

  <Sv>
    <path d="M4.700 3.300 23.100 23" stroke="#fff" strokeWidth="5.500" strokeLinecap="round" />
    <circle cx="23.100" cy="23" r="7" fill="#fff" />
    <path d="M4.700 3.300 23.100 23" stroke="#F8312F" strokeWidth="3" strokeLinecap="round" />
    <circle cx="23.100" cy="23" r="4.700" fill="#F8312F" />
    <circle cx="25" cy="20.800" r="1.800" fill="#FF8687" />
    <g stroke="#000" strokeWidth="1.400" strokeLinecap="round">
      <path d="M8.500 6.700l2.500-2.400M12.700 10.900l2.500-2.400M17.100 15.500l2.500-2.400" />
    </g>
  </Sv>,
  <Sv>
    <rect x="2" y="15.800" width="28.400" height="12" rx="2" fill="#F9C23C" />
    <path d="M6.800 23.800 16 15" stroke="#7D4533" strokeWidth=".8" />
    <path d="M6.800 7.500C8 4 12 2.500 16 3c6 .5 12 6 13 13 .5 4-1 7-3.500 9z" fill="#F8312F" />
    <path d="M10.800 11.200 15.500 3c3 .3 5 3.500 6 7.500.5 2 .5 4.500-.5 6.500zM23 20l1-6c.5-3-.5-6-1-7 3 2 4.500 6 4.500 9 0 3-.8 6-2 7.500z" fill="#E6E6E6" />
  </Sv>,
  <Sv>
    <g transform="rotate(41 15 18.700)">
      <rect x="11.200" y="7.700" width="7.600" height="22" rx="1.500" fill="#F8312F" />
    </g>
    <path d="M21 12c1-1.500 1.800-3.500 2.500-5" stroke="#402A32" strokeWidth=".8" fill="none" />
    <circle cx="24.200" cy="4.300" r="3.200" fill="#FF822D" />
    <circle cx="24.200" cy="4.300" r="3.800" fill="none" stroke="#FF822D" strokeWidth="1" strokeDasharray="1 1" />
  </Sv>,
  <Sv>
    <path d="M13.500 20.500c.5 2-1 3-1 5 0 1.500-.5 3-3 3" fill="none" stroke="#3F5FFF" strokeWidth=".9" strokeLinecap="round" />
    <ellipse cx="18.100" cy="10" rx="9.200" ry="9" fill="#F8312F" />
    <circle cx="23.100" cy="6.700" r="1.800" fill="#FF8687" />
    <path d="M11.800 18.500l3.500 1.800-.6 1-3.500-1.600z" fill="#CA0B4A" />
  </Sv>,
  <Sv>
    <ellipse cx="13.500" cy="17.500" rx="4.500" ry="7.500" transform="rotate(30 13.500 17.500)" fill="#7D4533" />
    <path d="M9.700 11.200 2.400 28.400c-.3.800.5 1.500 1.300 1.200l15-8.500C15 20 11 16.500 9.700 11.200z" fill="#FFB02E" />
    <path d="M8.200 14.800c1.500 3.500 4.500 6.500 7.500 7.800l-2.500 1.400c-3-1.500-5.500-4-6.300-6.500zM5.500 20.800c1 2.500 2.800 4.300 4.800 5.300l-2.500 1.400c-1.500-.8-3-2.300-3.700-3.800z" fill="#3F5FFF" />
    <g fill="none" strokeLinecap="round" strokeWidth="1.300">
      <path d="M13.500 4.500c1 1.500 1.500 4 0 7" stroke="#F70A8D" />
      <path d="M21.500 3c.3 3-.5 5-1 7-.5 1.500-2.500 2-2.500 0 0-1.500 2-2 3-.5" stroke="#00A6ED" />
      <path d="M23 11c2-1.500 4-1.500 6.500-.5" stroke="#F70A8D" strokeWidth="1.600" />
      <path d="M17 23c.5-3 3-6 7-5.500 2 .2 3.500 1 4 2.500" stroke="#00A6ED" strokeWidth="1.800" />
    </g>
    <g>
      <circle cx="11" cy="4" r=".7" fill="#F9C23C" /><circle cx="9.500" cy="9" r=".9" fill="#F70A8D" /><circle cx="24.500" cy="7.500" r=".9" fill="#F70A8D" />
      <circle cx="16.500" cy="15" r=".9" fill="#00A6ED" /><circle cx="26" cy="22" r=".7" fill="#F9C23C" />
    </g>
  </Sv>,
  <Sv>
    <path d="M2 11c0-4 2.500-7 6-7s6 2.300 7 5l-3.500 11C6 20 2 16 2 11z" fill="#F9C23C" />
    <path d="M30 11c0-4-2.500-7-6-7s-6 2.300-7 5l3.500 11c5.500 0 9.500-4 9.500-9z" fill="#F9C23C" />
    <path d="M14.500 8.500c-2-1-5.500.5-6.500 4-.5 2 0 4 1 6l2.500 1.500z" fill="#7D4533" />
    <path d="M17.500 8.500c2-1 5.500.5 6.500 4 .5 2 0 4-1 6l-2.500 1.500z" fill="#7D4533" />
    <g fill="none" strokeLinecap="round" strokeWidth="1.100">
      <path d="M8 14c1 3-2 6-1 9 .3 1-1 2-1.500 3" stroke="#00A6ED" />
      <path d="M11 12c2 2 3 4 2.500 7 0 2 1.500 2 1.500 4" stroke="#F70A8D" />
      <path d="M21 11c.3 3 0 4-1.500 5.500-.5-2 1-3 2-2.500" stroke="#00A6ED" />
      <path d="M26 14.500c-1 3 0 5 1 7 .5 1.500.5 3-.5 4" stroke="#F70A8D" />
    </g>
    <circle cx="11" cy="26" r=".7" fill="#F9C23C" /><circle cx="17" cy="24" r=".7" fill="#F70A8D" /><circle cx="14.500" cy="27.500" r=".7" fill="#00A6ED" /><circle cx="24" cy="26" r=".8" fill="#F9C23C" />
  </Sv>,
  <Sv>
    <path d="M4 26V17c0-2 1.500-3.700 5-3.700s6 1.700 6 3.700v10z" fill="#00A6ED" />
    <path d="M16.800 27v-9c0-2.500 1.500-4.500 5.800-4.500s6 2 6 4.500v9z" fill="#F92F60" />
    <path d="M10 16 9.500 23h1l.5-7z" fill="#FFD53F" />
    <path d="M22.500 17c1.500-1 4.500-.5 4.200 1.800-.2 1.800-2.500 4.200-4.200 5-1.700-.8-4-3.200-4.200-5-.3-2.300 2.700-2.800 4.200-1.800z" fill="#FFD53F" transform="translate(.3 -.5) scale(1)" />
    <circle cx="10" cy="10" r="3" fill="#321B41" />
    <rect x="7.500" y="10.500" width="5" height="5" rx="1.500" fill="#F4F4F4" />
    <path d="M9.700 4h.7v3.500h-.7zM8.300 5.500h3.500v.7H8.300z" fill="#AEAEDD" />
    <circle cx="22.700" cy="10.500" r="3.500" fill="#321B41" />
    <rect x="20.200" y="10.500" width="5" height="5" rx="1.500" fill="#F4F4F4" />
    <path d="M21 5l1.700 1.500L24.500 5l-.3 2.800h-3z" fill="#F9C23C" />
    <rect x="2" y="26.700" width="28.500" height="2" rx=".5" fill="#B4712A" />
  </Sv>,
  <Sv>
    <rect x="4" y="5.800" width="2" height="23" fill="#F9C23C" />
    <ellipse cx="5" cy="3.800" rx="3" ry="3" fill="#F9C23C" />
    <path d="M6 10.500h6M7 8.500l5 2-5 2M6 22.500h6M7 20.500l5 2-5 2" stroke="#533566" strokeWidth=".8" fill="none" />
    <path d="M12 8c5-2 9-2 14 1.500l3-2.800c.5 2-.5 4.500-1 5 .5.500 1.500 3 1 5L26 13.500C21 17 17 17 12 15z" fill="#00A6ED" />
    <path d="M12 8c1-.5 2-.8 3-1v9.200c-1-.2-2-.5-3-1.200z" fill="#26EAFC" />
    <path d="M12 20c5-2 9-2 14 1.500l3-2.800c.5 2-.5 4.500-1 5 .5.500 1.500 3 1 5l-3-3.200C21 29 17 29 12 27z" fill="#F8312F" />
    <path d="M12 20c1-.5 2-.8 3-1v9.200c-1-.2-2-.5-3-1.200z" fill="#CA0B4A" />
    <circle cx="17.500" cy="10.500" r=".6" fill="#1C1C1C" /><circle cx="17.500" cy="22.500" r=".6" fill="#1C1C1C" />
  </Sv>,
  <Sv>
    <path d="M16.800 .5v3" stroke="#3F5FFF" strokeWidth=".7" />
    <rect x="8.200" y="2.500" width="17.300" height="11" rx="5" fill="#83CBFF" />
    <path d="M16.800 13.500v5" stroke="#3F5FFF" strokeWidth=".7" />
    <circle cx="16.800" cy="15.800" r="1.500" fill="#F9C23C" />
    <path d="M14 19.500h5l1.800 9.500H15.500L14.500 25z" fill="#B4ACBC" />
    <g fill="#F8312F">
      <circle cx="17" cy="21" r=".5" /><circle cx="18" cy="24" r=".5" /><circle cx="18.500" cy="27" r=".5" />
    </g>
    <path d="M21.500 4.800h1.500M22.250 4v1.600M23.700 7.500h1.500M24.450 6.700v1.600M21.700 9.700h1.500M22.450 8.900v1.600" stroke="#FF822D" strokeWidth=".4" />
  </Sv>,
  <Sv>
    <rect x="2" y=".8" width="28.400" height="28" rx=".8" fill="#F8312F" />
    <path d="M2 7l14.200 9.500L30.400 7" fill="none" stroke="#CA0B4A" strokeWidth=".9" />
    <circle cx="16.300" cy="15" r="6" fill="#CA0B4A" />
    <text x="16.300" y="18.300" textAnchor="middle" fontSize="9" fill="#F9C23C" fontFamily="'Noto Sans CJK SC', sans-serif">福</text>
  </Sv>,
  <Sv>
    <path d="M3 5c0-2 2-2.500 3.500-1.500L13 7l-2 8 -7-.5C2.500 13 3 8 3 5zM29.500 5c0-2-2-2.500-3.500-1.500L19.500 7l2 8 7-.5c1.500-1.500 1-6.500 1-9.500z" fill="#F8312F" />
    <path d="M6 20 4.500 28.500 8.500 26l2 3 3-11zM26 20l1.500 8.500-4-2.500-2 3-3-11z" fill="#F8312F" />
    <ellipse cx="6.500" cy="15.500" rx="4.500" ry="3.700" fill="#CA0B4A" /><ellipse cx="25.500" cy="15.500" rx="4.500" ry="3.700" fill="#CA0B4A" />
    <rect x="12" y="4.500" width="8.500" height="13.500" rx="2.500" fill="#CA0B4A" />
  </Sv>,
  <Sv>
    <circle cx="9.500" cy="4.700" r="3.900" fill="#F8312F" /><circle cx="23.200" cy="4.700" r="3.900" fill="#F8312F" />
    <rect x="5.200" y="12" width="22" height="16.700" rx="1.500" fill="#FFD53F" />
    <rect x="3" y="6.700" width="26.400" height="7.100" rx="1.500" fill="#FFB02E" />
    <path d="M13.400 28.700V4.200c0-1.500 1.300-2.700 2.800-2.700S19 2.700 19 4.200v24.500z" fill="#CA0B4A" />
  </Sv>,
  <Sv>
    <path d="M14.300 21v2.500c0 3 2 5.200 5 5.200h3.300c2.700 0 4.400-2.300 4.400-5V6" fill="none" stroke="#F8312F" strokeWidth="2.600" />
    <rect x="25.700" y=".8" width="2.800" height="4.500" fill="#533566" />
    <rect x="10.300" y="18.800" width="6.900" height="2.300" rx="1" fill="#533566" />
    <path d="M3.400 9.500C3.400 6 6 3.700 9 3.700h9.500c3.200 0 5.800 2.300 5.800 5.800 0 3.500-2.200 5.800-4.800 5.800-1.500 0-2.500-.3-3-1.500-.5-1.200-2-1.200-2.800 0-.7 1.200-1.700 1.500-3.300 1.500-3 0-5-2.300-5-5.800z" fill="#F8312F" />
    <path d="M5 9.500C5 7 7 5.300 9.200 5.300h9.100c2.400 0 4.400 1.700 4.400 4.200s-1.500 4.200-3.200 4.200c-1.200 0-1.900-.4-2.500-1.300-.9-1.400-2.800-1.400-3.700 0-.6 .9-1.300 1.300-2.300 1.300C7 13.700 5 12 5 9.500z" fill="#AEDDFF" />
    <path d="M12.500 13.500c.5-1 2.500-1 3 0 .8 1.500.3 3.500-1.500 3.800-1.800-.3-2.300-2.300-1.500-3.800z" fill="#533566" />
  </Sv>,
  <Sv>
    <path d="M19.500 1c-1.500 2-2 4-1.200 6 .9 2.300 3.500 3.500 6 3.300 2-.2 3.500-1.500 5-3-3 1-5.500 1-7.500-1-1.500-1.500-2.300-3.500-2.300-5.300z" fill="#FFB02E" transform="translate(0 3.500)" />
    <path d="M8.300 12.500 25 12.800 30.400 28.700H14.200z" fill="#86D72F" />
    <path d="M8.300 12.500 2.400 28.700h3.500z" fill="#44911B" />
    <path d="M8.300 12.500 5.900 28.700h8.300z" fill="#1C1C1C" />
    <path d="M8.300 12.500 5.500 28.700h2z" fill="#86D72F" />
    <path d="M16 16.700h4.500l1.500 5.500h-4.800z" fill="#44911B" />
  </Sv>,
  <Sv>
    <rect x="2" y=".8" width="28.400" height="28" rx="3" fill="#E6E6E6" />
    <path d="M6 9c0-1 .7-1.500 1.500-1.500h3v-1.500c0-1 .7-1.500 1.500-1.500s1.500.5 1.500 1.500V13H27v15H6z" fill="#9B9B9B" opacity=".9" />
    <path d="M2 13c0-.5.5-1 1-1h3.500v16.800H5c-1.700 0-3-1.300-3-3z" fill="#5092FF" />
    <rect x="9.500" y="9.500" width="10.300" height="19.300" fill="#5092FF" rx=".5" />
    <rect x="23.700" y="18" width="6.700" height="10.800" rx="1" fill="#5092FF" />
    <path d="M24.500 19.700h5.900v1.600h-5.900zM24.500 24h5.900v1.600h-5.900z" fill="#FFF478" />
    {[[11.800, 11.500, 1], [15.700, 11.500, 0], [11.800, 15.500, 1], [15.700, 15.500, 1], [11.800, 19.500, 1], [15.700, 19.500, 1], [11.800, 23.500, 0], [15.700, 23.500, 0]].map(([x, y, l]) => win(x, y, 1.900, 2.100, l ? "#FFF478" : "#321B41"))}
    {[[3.400, 15, 0], [3.400, 19.500, 1], [3.400, 24, 0]].map(([x, y, l]) => win(x, y, 1.600, 2, l ? "#FFF478" : "#321B41"))}
    <path d="M2 4c2 1 3 .2 5 .2 2.500 0 4 1 6 .2 2-.5 4-.5 6.500 0 3 .5 4 .5 5 0 2-.8 3.500-.5 5.900-.2V3.800c0-1.700-1.300-3-3-3H5c-1.700 0-3 1.300-3 3z" fill="#D3D3D3" />
    <path d="M2 27c2-1 5-1.200 7-.5 3 1 4 1.500 7 .5 3-1 4-1.500 6-.5 2 1 5 1.300 8.400 .3v-.5V25.800c0 1.700-1.300 3-3 3H5c-1.700 0-3-1.300-3-3z" fill="#D3D3D3" />
    <circle cx="25.300" cy="22.300" r="1.800" fill="#5092FF" /><circle cx="19.800" cy="26" r="1.800" fill="#5092FF" /><circle cx="22.500" cy="25.500" r="1.800" fill="#5092FF" />
  </Sv>,
  <Sv>
    <rect x="2" y="9" width="2" height="16.800" fill="#533566" />
    <rect x="3.800" y="15.800" width="8" height="5.500" fill="#A17FD8" />
    <path d="M11.600 14.500c0-1.500 1-2.500 2.500-2.500H27c1.900 0 3.400 1.500 3.400 3.400v5.800H11.600z" fill="#0097E6" />
    <rect x="2" y="21.200" width="28.400" height="4.600" fill="#533566" />
    <rect x="3.800" y="25.800" width="3" height="2.900" fill="#635994" /><rect x="25.500" y="25.800" width="3" height="2.900" fill="#635994" />
    <circle cx="9" cy="12.500" r="3.300" fill="#FFB02E" />
    <path d="M8.700 9c1-.5 2-.5 3 .5.700.8 1 1.800.5 3-.8-1-1.800-1.300-2.800-1.500C8.900 10.800 8.500 10 8.700 9z" fill="#F9C23C" />
  </Sv>,

  <Sv>
    <path d="M5.800 4.800 13.500 13" stroke="#635994" strokeWidth="5.500" strokeLinecap="round" />
    <circle cx="6.200" cy="5.300" r=".8" fill="#F9C23C" /><circle cx="10.200" cy="9.800" r=".8" fill="#F9C23C" />
    <polygon points="11.500,16 15,11.500 18,14.800 14.800,18.500" fill="#D3D3D3" />
    <path d="M13.900 13.300 30.300 26c.3 1.500-1 3.200-3 3.800-1.500.4-2.500 0-3.300-.8L9.800 17.300z" fill="#B4ACBC" />
    <path d="M9.800 17.300 24 29c1 .8 2 1.200 3.300.8 1.500-.4 2.600-1.500 3-2.800l-3 1.600c-1 .3-1.800.2-2.500-.5z" fill="#E6E6E6" />
  </Sv>,
  <Sv>
    <path d="M10.500 3.500c-3 1-3.800 4-2.800 7 .5 1.500 1.500 2.500 3 3.300M21.500 3.500c3 1 3.800 4 2.800 7-.5 1.500-1.500 2.500-3 3.300" fill="none" stroke="#7D4533" strokeWidth="1.100" />
    <path d="M13 3.400h6l.4 5c.2 2.300 4.400 3.700 4.400 9 0 4.800-3.500 8-5 11.400h-5.700c-1.500-3.400-5-6.600-5-11.400 0-5.300 4.200-6.700 4.400-9z" fill="#B97028" />
    <rect x="11.900" y="1" width="8.700" height="2.500" rx="1" fill="#7D4533" />
    <rect x="12.800" y="28.500" width="6.600" height="2" fill="#7D4533" />
    <path d="M8.500 15.500h15M8.500 20h15M10 15.500v3h3v-2h2v3h3v-3h2v2h2v-3" fill="none" stroke="#7D4533" strokeWidth=".7" />
  </Sv>,
  <Sv>
    <path d="M2 7 11.500 4 21 7l9.500-3v26L21 33l-9.500-3L2 33z" fill="#fff" />
    <path d="M3.500 8.500 11.500 6V28.500L3.500 31z" fill="#00A6ED" />
    <path d="M11.500 6 21 8.500V31l-9.500-2.500z" fill="#0074BA" />
    <path d="M21 8.500 29 6V28.500L21 31z" fill="#00A6ED" />
    <path d="M5.500 10.500c1.500-1 4.500-1.500 5.500 0 1 1 .5 3-1 4-.8 1.500.5 2.500-1 4.500-1-1-1.500-3-2-4-1-1-2.500-3.500-1.500-4.500zM14 13c1.500-1.500 4-2.500 6-1.500 1.500-2 4.500-3 7-2 .5 1.500 0 3.500-2 4-1 1-2.500 1.500-3 3.500-.5 2-1 4.500-2.500 3.500-.5-2-2-2-3-4-1-1-2.500-2-2.500-3.500zM25 21c1 0 2 1 1.500 2.500-.5.500-2 .5-2 0 0-1 0-2 .5-2.500zM8 21c1 .5 1.500 2 .5 3.500-.7-.5-1.300-2-.5-3.500z" fill="#00D26A" />
  </Sv>,
  <Sv>
    <circle cx="27.300" cy="4.300" r="2.300" fill="none" stroke="#F9C23C" strokeWidth="1.300" />
    <circle cx="15.700" cy="15.700" r="13.700" fill="#F9C23C" />
    <circle cx="15.700" cy="15.700" r="11.200" fill="#F3F3F3" />
    <polygon points={starN(15.700, 15.700, 9.500, 1.500, 8)} fill="#9B9B9B" />
    <polygon points="10.500,7 16.800,13.700 14,15.700" fill="#F92F60" />
    <circle cx="15.700" cy="15.700" r="2.800" fill="#D3D3D3" />
  </Sv>,
  <Sv>
    <rect x="2" y="1" width="28.400" height="29.500" rx="3" fill="#D3D3D3" />
    <g fill="#FF6723">
      <path d="M2 4c0-1.700 1.300-3 3-3h2v5.500H2z" /><rect x="9" y="1" width="14" height="5.500" /><path d="M25 1h2.400c1.700 0 3 1.300 3 3v2.500H25z" />
      <rect x="2" y="8.700" width="13" height="5.600" /><rect x="17" y="8.700" width="13.400" height="5.600" />
      <rect x="2" y="16.500" width="5" height="5.800" /><rect x="9" y="16.500" width="14" height="5.800" /><rect x="25" y="16.500" width="5.400" height="5.800" />
      <path d="M2 24.500h13v6H5c-1.700 0-3-1.300-3-3z" /><path d="M17 24.500h13.400v3c0 1.700-1.300 3-3 3H17z" />
    </g>
  </Sv>,
  <Sv>
    <rect x="12" y="9" width="8" height="15.500" fill="#fff" />
    <g stroke="#00A6ED" strokeWidth="1.300"><path d="M12 11.500 20 9.500M12 17 20 15M12 22.500 20 20.500" /></g>
    <g stroke="#CA0B4A" strokeWidth="1.300"><path d="M12 14 20 12M12 19.500 20 17.500M12 24.500 20 23" /></g>
    <path d="M12.700 4.300c.3-2 1.500-3.300 3.300-3.300s3 1.300 3.300 3.300z" fill="#D3D3D3" />
    <rect x="9.500" y="4.300" width="13" height="4.900" rx="2.400" fill="#9B9B9B" />
    <rect x="9.500" y="24.500" width="13" height="5.500" rx="2.700" fill="#9B9B9B" />
  </Sv>,
  <Sv>
    <path d="M26 1.800 24 13M12 10.500h13" stroke="#F92F60" strokeWidth="2" fill="none" />
    <rect x="24.600" y="1" width="5.500" height="1.800" rx=".9" fill="#1C1C1C" />
    <path d="M11.500 21c-.5-3 0-6 .2-8 .3-2 1-3.300 3-3.300H23" fill="none" stroke="#F92F60" strokeWidth="2" />
    <rect x="11.700" y="13" width="12" height="2.500" rx=".7" fill="#1C1C1C" />
    <path d="M12 16 11 21l3 2.500M9 18 4.500 25" fill="none" stroke="#F92F60" strokeWidth="2" strokeLinejoin="round" />
    <path d="M3.500 24 5.500 26.500" stroke="#1C1C1C" strokeWidth="2" strokeLinecap="round" />
    <rect x="10.400" y="20" width="1.700" height="6" fill="#9B9B9B" />
    <circle cx="11.100" cy="26" r="2.700" fill="#1C1C1C" /><circle cx="11.100" cy="26" r=".8" fill="#9B9B9B" />
    <circle cx="23.400" cy="21" r="7.900" fill="#1C1C1C" />
    <circle cx="23.400" cy="21" r="5.800" fill="#D3D3D3" />
    <circle cx="23.400" cy="21" r="2" fill="#1C1C1C" />
  </Sv>,
  <Sv>
    <path d="M23 2.500c1-1.500 3.500-1.200 3.500 1l-1.500 17.500h-4z" fill="#5092FF" />
    <rect x="10.500" y="14.500" width="13.800" height="4.800" rx="2" fill="#5092FF" />
    <rect x="10.500" y="9.500" width="8" height="3.300" rx="1.500" fill="#635994" />
    <path d="M18 10l2 3" stroke="#9B9B9B" strokeWidth="1.500" />
    <rect x="12" y="19.300" width="12" height="2" fill="#AEDDFF" />
    <path d="M9.500 27V24c0-1.700 1.300-3 3-3h13.200v7H10z" fill="#321B41" />
    <path d="M12.500 25.500 6.500 27" stroke="#9B9B9B" strokeWidth="1" />
    <circle cx="6.700" cy="27" r="2.200" fill="#9B9B9B" /><circle cx="6.700" cy="27" r=".8" fill="#E6E6E6" />
    <circle cx="23" cy="24.800" r="5.600" fill="#E6E6E6" />
    <circle cx="23" cy="24.800" r="3" fill="#321B41" />
    <circle cx="23" cy="24.800" r="1.600" fill="#E6E6E6" />
  </Sv>,
  <Sv>
    <path d="M19.500 1H23c.5 0 1 .5 1 1v1.500h-5V2c0-.5 0-1 .5-1z" fill="#1C1C1C" />
    <rect x="7.500" y="3.200" width="18" height="26" fill="#00A6ED" />
    <rect x="20" y="3.200" width="4" height="26" fill="#26EAFC" /><rect x="21" y="3.200" width="1" height="26" fill="#00A6ED" />
    <g fill="#0074BA">
      <rect x="6.700" y="3.200" width="19.300" height="2" /><rect x="6.700" y="11.200" width="19.300" height="2" />
      <rect x="6.700" y="19.400" width="19.300" height="2" /><rect x="6.700" y="27.700" width="19.300" height="2.300" />
    </g>
  </Sv>,
  <Sv>
    <rect x="13.500" y="3" width="6" height="2.300" rx="1" fill="#FFB02E" />
    <rect x="15.500" y="5" width="2" height="2" fill="#FFB02E" />
    <path d="M4 20.700V19C4 11 8.500 6.500 16.300 6.500S28 11 28 19v1.700z" fill="#FFB02E" />
    <rect x="2" y="20.700" width="28.500" height="2" rx="1" fill="#FFB02E" />
    <rect x="14.500" y="22.700" width="3.700" height="2" fill="#FF822D" />
    <path d="M4.500 24.500h23.700l2.300 4.200H2z" fill="#5C2A12" />
    <ellipse cx="20" cy="10" rx="1.900" ry="2.100" fill="#fff" />
  </Sv>,
  <Sv>
    <path d="M12.800 4.500V2.500c0-.6.4-1 1-1h5c.6 0 1 .4 1 1v2" fill="none" stroke="#433B6B" strokeWidth=".9" />
    <rect x="10" y="28" width="1.800" height="2" fill="#1C1C1C" /><rect x="21" y="28" width="1.800" height="2" fill="#1C1C1C" />
    <rect x="7" y="4.500" width="18.200" height="24" rx="3.500" fill="#00A6ED" />
    <rect x="9.200" y="7" width="1.500" height="19" rx=".7" fill="#26EAFC" /><rect x="15.300" y="7" width="1.500" height="19" rx=".7" fill="#26EAFC" /><rect x="21.300" y="7" width="1.500" height="19" rx=".7" fill="#26EAFC" />
    <rect x="17.500" y="4.500" width="4" height="6" rx=".6" transform="rotate(-40 19.500 7.500)" fill="#F3F3F3" />
  </Sv>,
  <Sv>
    <rect x="2" y="1" width="28.400" height="29" rx="3" fill="#635994" />
    <path d="M5 28V10h3V8h2.500V6c0-1 .8-1.800 1.700-1.800s1.800.8 1.800 1.800v24H5z" fill="#1C1C1C" />
    <rect x="19" y="14" width="7" height="16" fill="#1C1C1C" />
    <path d="M2 15c0-.8.6-1.400 1.400-1.400H7V30H5c-1.700 0-3-1.300-3-3z" fill="#433B6B" />
    <path d="M9.500 11.300c0-.6.4-1 1-1h7.800c.6 0 1 .4 1 1V30H9.500z" fill="#433B6B" />
    <path d="M23.700 19.500c0-.5.4-1 1-1h5.700v8.500c0 1.700-1.300 3-3 3h-3.700z" fill="#433B6B" />
    <path d="M24.500 20.700h5.900v1.900h-5.900zM24.500 25h5.900v1.900h-5.900z" fill="#FFF478" />
    {[[11.800, 12.500, 0], [15.600, 12.500, 0], [11.800, 16.500, 1], [15.600, 16.500, 1], [11.800, 20.500, 1], [15.600, 20.500, 1], [11.800, 24.500, 0], [15.600, 24.500, 1]].map(([x, y, l]) => win(x, y, 1.900, 2.100, l ? "#FFF478" : "#1C1C1C"))}
    {[[3.400, 16, 0], [3.400, 20.400, 1], [3.400, 25, 0]].map(([x, y, l]) => win(x, y, 1.600, 2, l ? "#FFF478" : "#1C1C1C"))}
    <path d={star4(5.500, 4, 1.300, 1.600)} fill="#F3F3F3" /><path d={star4(16.500, 7, 1.800, 2.400)} fill="#F3F3F3" />
    <path d={star4(21, 3.200, 1.200, 1.500)} fill="#F3F3F3" /><path d={star4(26, 11, 1.200, 1.500)} fill="#F3F3F3" />
    <path d="M26.500 2.500c.7 2 .3 4.500-1 6-1.300 1.300-3.500 1.800-5 1 2 .2 3.800-.5 4.800-2 .9-1.400 1.300-3.300 1.200-5z" fill="#FFB02E" />
  </Sv>,
  <Sv>
    <City bg="#5FE3FF" back="#1C5CD7" backDark="#1C5CD7" mid="#5092FF" left="#46A4FB" right="#46A4FB" wins="#321B41" extra={
      <g fill="#F3F3F3"><circle cx="17" cy="5" r="1.700" /><circle cx="14.700" cy="5.400" r="1" /><circle cx="23.500" cy="9.200" r="3.500" /><circle cx="19.500" cy="11" r="2" /><circle cx="27" cy="10.500" r="1.500" /></g>
    } />
  </Sv>,
  <Sv>
    <rect x="2" y="1" width="28.400" height="29" rx="3" fill="#FF6059" />
    <polygon points={starN(16, 15, 12.500, 10.300, 12)} fill="#FF822D" />
    <circle cx="16" cy="14.500" r="9.300" fill="#FFD53F" />
    <path d="M2 23c1.500-1 3-1 4 .5l8-9.500c1-1 3-1 4 0l8 9.500c1-1.500 3-1.500 4.400-.5V27c0 1.700-1.300 3-3 3H5c-1.700 0-3-1.300-3-3z" fill="#008463" />
    <path d="M2 23c1.300-.9 2.800-1 4-.3L6.700 23 4 26.500l3 3.500H5c-1.700 0-3-1.300-3-3z" fill="#14A085" />
    <path d="M16 13.300l.6.700c0 3.500.5 7 2.500 9.500l5.500 6.500h-4l-4.500-5.500z" fill="#00755A" opacity=".5" />
  </Sv>,
  <Sv>
    <rect x="2" y="1" width="28.400" height="29" rx="3" fill="#FF6059" />
    <polygon points={starN(16, 15.500, 12, 10, 12)} fill="#FF822D" />
    <circle cx="16" cy="15.500" r="8.700" fill="#FFD53F" />
    <path d="M2 21.500h28.400V27c0 1.700-1.300 3-3 3H5c-1.700 0-3-1.300-3-3z" fill="#46A4FB" />
    <rect x="8" y="23.600" width="16" height="1" fill="#fff" /><rect x="12.500" y="27" width="7.500" height="1" fill="#fff" />
  </Sv>,
  <Sv>
    <City bg="#A56CC0" back="#433B6B" backDark="#433B6B" mid="#5C5490" left="#5C5490" right="#5C5490" wins="#1C1C1C" />
  </Sv>,
];

const Magnifier = () => (
  <svg viewBox="0 0 88 88" className="w-[88px] h-[88px] shrink-0 [filter:drop-shadow(3px_3px_3px_rgba(0,0,0,0.45))]">
    <path d="M53 60 71 74" stroke="#635994" strokeWidth="14" strokeLinecap="round" />
    <circle cx="33" cy="33" r="29" fill="#635994" />
    <circle cx="33" cy="33" r="24" fill="#00A6ED" />
    <ellipse cx="44" cy="20" rx="4" ry="5.500" fill="#fff" transform="rotate(-15 44 20)" />
  </svg>
);

const Scrollbar = () => (
  <aside className="w-[25px] shrink-0 bg-[#F1F1F1] flex flex-col">
    <svg viewBox="0 0 25 25" className="block w-[25px] h-[25px] shrink-0">
      <polygon points="12.500,9 6.500,16 18.500,16" fill="#505050" />
    </svg>
    <div className="mx-[2px] h-[704px] bg-[#BDBDBD]" />
    <svg viewBox="0 0 25 25" className="block w-[25px] h-[25px] shrink-0 mt-auto">
      <polygon points="12.500,16 6.500,9 18.500,9" fill="#505050" />
    </svg>
  </aside>
);

export default function App() {
  return (
    <div className="h-[904px] flex flex-col overflow-hidden font-['Inter',sans-serif]">
      <div className="flex flex-1 min-h-0">
        <main className="flex-1 min-w-0 overflow-hidden flex flex-col items-center bg-[linear-gradient(180deg,#2FAAE2_0%,#7B1FF6_100%)] text-black">
          <div className="h-[150px] shrink-0 flex items-center justify-center">
            <h1 className="text-[76px] leading-none font-bold tracking-[-2.7px] [text-shadow:3px_4px_5px_rgba(0,0,40,0.6)] mr-[18px] pb-[2px]">EmojiRecog</h1>
            <div className="mt-[2px]"><Magnifier /></div>
          </div>
          <p className="mt-[25px] h-[50px] shrink-0 flex items-center text-[26px] tracking-[1.17px] whitespace-nowrap">
            Sometimes finding the exact meaning of Emoji becomes a tough task. EmojiRecog is here to help and search the meaning instantly.
          </p>
          <input
            readOnly
            placeholder="Enter any emoji you want to search"
            className="mt-[24px] shrink-0 w-[423px] h-[91px] rounded-[46px] bg-white pl-[30px] pr-[20px] text-[20px] tracking-[0.35px] border-2 [border-style:inset] border-[#767676] placeholder:text-[#757575] outline-none"
          />
          <h2 className="mt-[55px] h-[50px] shrink-0 flex items-center text-[36px] font-bold tracking-[0.42px] whitespace-nowrap">
            Select one of your favourite emoji and know its meaning
          </h2>
          <div className="mt-[63px] grid grid-cols-[repeat(16,104px)] justify-center justify-items-center gap-y-[19.5px]">
            {emojis.map((e, i) => (
              <div key={i} className="w-16 h-16">{e}</div>
            ))}
          </div>
        </main>
        <Scrollbar />
      </div>
      <div className="h-[3px] shrink-0 bg-[#0E2A33]" />
    </div>
  );
}
